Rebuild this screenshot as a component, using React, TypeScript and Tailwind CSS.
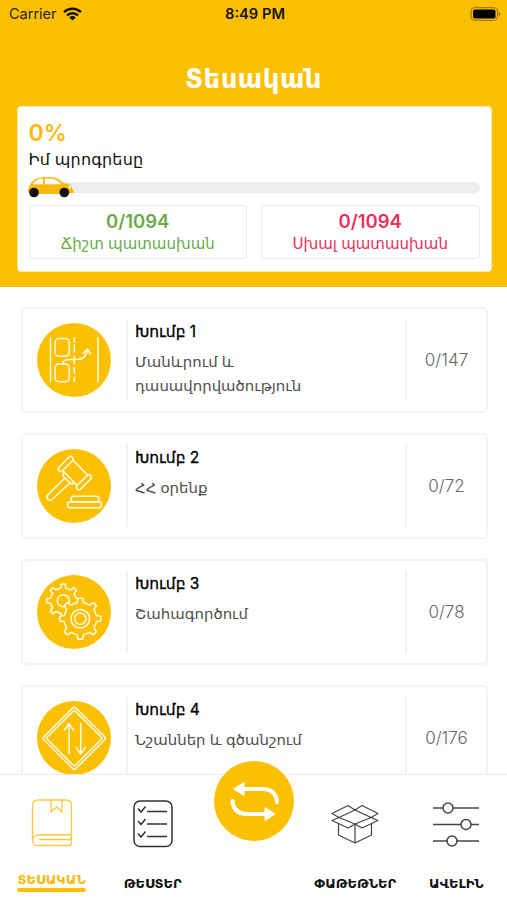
import React from 'react';

const CarIcon = () => (
  <svg width="47" height="22" viewBox="0 0 47 22" fill="none">
    <path
      d="M1 16.500V13l1.500-2.500c1-4 4.500-7.500 8.500-8.500 5-1.300 14-1.600 18 0 3 1.200 5.500 3.500 8 5.200 3 .2 6 .8 7.500 2.800l.7 2.500 1.300 1.500v3L37 18H8z"
      fill="#fbb90c"
    />
    <path d="M5.500 8.300c2-3 4.500-4.700 7-5.300l3.300-.5v5.800z" fill="#fff" />
    <path d="M17.800 2.500c4-.3 8 0 10.200 1 2 .9 4.500 2.800 6.500 4.800H17.800z" fill="#fff" />
    <circle cx="42.800" cy="11" r="1.300" fill="#fff" />
    <circle cx="7" cy="16.500" r="4.800" fill="#111" />
    <circle cx="37.300" cy="16.500" r="4.800" fill="#111" />
  </svg>
);

const LaneIcon = () => (
  <>
    <path d="M13.500 14.700v44M61 14.700v44" />
    <rect x="18" y="15.500" width="14.300" height="17.800" rx="4" />
    <rect x="18" y="41" width="14.300" height="17.800" rx="4" />
    <path d="M37.300 14.700v4M37.300 22v7M37.300 33v8M37.300 44.500v6M37.300 54.500v4" />
    <path d="M26 41c0-3 2.500-4.500 6-4.500h8c4 0 9-2 10.300-9.500M46 30.500l4.300-4.500 3.200 5" />
  </>
);

const GavelIcon = () => (
  <>
    <rect x="-9.500" y="-2.500" width="19" height="5" rx="2.500" transform="translate(28.700 15) rotate(-45)" />
    <rect x="-9.500" y="-2.500" width="19" height="5" rx="2.500" transform="translate(46.800 33.300) rotate(-45)" />
    <path d="M36.300 11.500L50 25.500M25.800 21.500L40 36.500" />
    <path d="M27 23l-1 4 8 8 4-1" />
    <path d="M28 29L11 45.500c-3 3.500 1 7.500 4.500 4.500L33 34" />
    <rect x="34.300" y="47.300" width="27.700" height="5.700" rx="2.500" />
    <rect x="30.500" y="53" width="34" height="5.700" rx="2.500" />
  </>
);

// outline of a cog with flat teeth around (cx, cy)
const cogPath = (cx: number, cy: number, root: number, tip: number, teeth: number) => {
  const points: string[] = [];
  const step = (Math.PI * 2) / teeth;
  for (let i = 0; i < teeth; i++) {
    const a = i * step - Math.PI / 2;
    [[-0.24, root], [-0.14, tip], [0.14, tip], [0.24, root]].forEach(([offset, r]) => {
      const t = a + offset * step;
      points.push(`${(cx + Math.cos(t) * r).toFixed(2)} ${(cy + Math.sin(t) * r).toFixed(2)}`);
    });
  }
  return `M${points.join('L')}Z`;
};

const CogsIcon = () => (
  <>
    <path d={cogPath(26.3, 25.7, 13, 16.8, 8)} />
    <circle cx="26.300" cy="25.700" r="6" />
    <path d={cogPath(43.3, 43.7, 16.5, 20.7, 8)} fill="#fbc002" />
    <circle cx="43.300" cy="43.700" r="9.300" />
    <circle cx="43.300" cy="43.700" r="5.700" />
  </>
);

const SignIcon = () => (
  <>
    <rect x="-22.500" y="-22.500" width="45" height="45" rx="2" transform="translate(37.300 37.300) rotate(45)" />
    <rect x="-19.800" y="-19.800" width="39.600" height="39.600" rx="1" transform="translate(37.300 37.300) rotate(45)" />
    <path d="M32 53V23M27.500 29l4.500-6.500 4.500 6.500M43.700 22.500v30M39.200 46.500l4.500 6.500 4.500-6.500" />
  </>
);

const groups = [
  { title: 'Խումբ 1', lines: ['Մանևրում և', 'դասավորվածություն'], score: '0/147', icon: <LaneIcon /> },
  { title: 'Խումբ 2', lines: ['ՀՀ օրենք'], score: '0/72', icon: <GavelIcon /> },
  { title: 'Խումբ 3', lines: ['Շահագործում'], score: '0/78', icon: <CogsIcon /> },
  { title: 'Խումբ 4', lines: ['Նշաններ և գծանշում'], score: '0/176', icon: <SignIcon /> },
];

const StatusBar = () => (
  <div className="grid h-7 grid-cols-3 items-center pl-[9px] pr-[6px] text-[14.500px] leading-none text-[#2b2205]">
    <div className="flex items-center gap-[6px]">
      <span>Carrier</span>
      <svg width="19" height="14" viewBox="0 0 19 14" fill="none" stroke="#111" strokeWidth="2.500">
        <path d="M1 5.200a12 12 0 0 1 17 0M4 8.400a7.800 7.800 0 0 1 11 0" />
        <path d="M9.500 13.500L6.300 10.400a4.500 4.500 0 0 1 6.400 0z" fill="#111" stroke="none" />
      </svg>
    </div>
    <span className="whitespace-nowrap text-center text-[14.700px] font-semibold text-[#171303]">8:49 PM</span>
    <svg className="justify-self-end" width="31" height="14" viewBox="0 0 31 14">
      <rect x="1" y=".7" width="26.500" height="12.600" rx="3.500" fill="none" stroke="#927006" />
      <rect x="3" y="2.500" width="22.500" height="9" rx="1.800" fill="#000" />
      <path d="M28.800 4.800c2 .8 2 3.600 0 4.400z" fill="#927006" />
    </svg>
  </div>
);

const Header = () => (
  <header className="h-[287px] bg-[#fbc002]">
    <StatusBar />
    <h1 className="flex h-[77px] items-center justify-center pt-[24px] text-[26px] font-bold leading-none tracking-[0.500px] text-white">
      Տեսական
    </h1>
    <section className="ml-[16.500px] mr-[15.500px] mt-px h-[166px] rounded-[4px] border border-[#fde9a8] bg-white px-[11px] pt-[13px]">
      <div className="h-[27px] text-[23px] font-semibold leading-[27px] text-[#fbb90c]">0%</div>
      <div className="h-[27px] whitespace-nowrap text-[16px] leading-[25px] tracking-[0.200px] text-[#111]">Իմ պրոգրեսը</div>
      <div className="relative mt-2 h-[11px] rounded-full bg-[#ededed]">
        <div className="absolute -left-[2px] -top-[6.500px]">
          <CarIcon />
        </div>
      </div>
      <div className="mt-3 grid grid-cols-2 gap-[14px] text-center">
        <div className="h-[54px] rounded-[4px] border border-[#ececec] pt-[4px] text-[#6aaa4a]">
          <div className="text-[18.500px] font-semibold leading-[22px]">0/1094</div>
          <div className="whitespace-nowrap text-[15px] leading-[23px]">Ճիշտ պատասխան</div>
        </div>
        <div className="h-[54px] rounded-[4px] border border-[#ececec] pt-[4px] text-[#e8315b]">
          <div className="text-[18.500px] font-semibold leading-[22px]">0/1094</div>
          <div className="whitespace-nowrap text-[15px] leading-[23px]">Սխալ պատասխան</div>
        </div>
      </div>
    </section>
  </header>
);

const GroupCard = ({ title, lines, score, icon }: (typeof groups)[number]) => (
  <div className="flex h-[106px] shrink-0 items-center rounded-[5px] border-2 border-[#f3f3f3] pl-[14px]">
    <svg
      className="shrink-0"
      width="74"
      height="74"
      viewBox="0 0 74 74"
      fill="none"
      stroke="#fffbea"
      strokeWidth="1.500"
      strokeLinecap="round"
      strokeLinejoin="round"
    >
      <circle cx="37" cy="37" r="37" fill="#fbc002" stroke="none" />
      {icon}
    </svg>
    <div className="ml-[15px] h-[82px] w-[281px] border-x-2 border-[#f3f3f3] pl-[7px] pt-px">
      <h2 className="whitespace-nowrap text-[15.500px] leading-6 text-black [-webkit-text-stroke:0.300px]">{title}</h2>
      <div className="mt-[6px] text-[14.900px] leading-6 text-[#4d4d4d]">
        {lines.map((line) => (
          <div key={line} className="whitespace-nowrap">{line}</div>
        ))}
      </div>
    </div>
    <div className="flex-1 pt-px text-center text-[17px] font-light text-[#666]">{score}</div>
  </div>
);

const BottomNav = () => (
  <nav className="absolute inset-x-0 bottom-0 grid h-[126px] grid-cols-5 border-t border-[#ebebeb] bg-white pl-px text-[13px] font-bold text-[#111]">
    <div className="flex flex-col items-center text-[#fbb90c]">
      <svg className="mt-[23px]" width="42" height="50" viewBox="0 0 42 50" fill="none" stroke="#fbc640" strokeWidth="1.300">
        <path d="M1.500 42V8q0-6 6-6h27q6 0 6 6v30q0 3.500-3 3.500" />
        <path d="M40.500 37H8q-6.500 0-6.500 5.500T8 47.500h30q2.500 0 2.500-3V36M39 41.500H8" />
        <path d="M20 2v12l5.500-5 5.500 5V2" />
      </svg>
      <span className="mt-[22px] leading-[18px] tracking-[0.100px]">ՏԵՍԱԿԱՆ</span>
      <span className="h-[4px] w-[69px] rounded-sm bg-[#fbc002]" />
    </div>
    <div className="flex flex-col items-center">
      <svg className="mt-[24px]" width="42" height="50" viewBox="0 0 42 50" fill="none" stroke="#333" strokeWidth="1.500">
        <rect x="2" y="2" width="38" height="45.500" rx="6" />
        <path d="M15 12.500h20M15 25h20M15 37.500h20" />
        <path d="M6 9.500l3 3.500 4.500-5.500M6 22l3 3.500 4.500-5.500M6 34.500l3 3.500 4.500-5.500" />
      </svg>
      <span className="mt-[25px] leading-[18px]">ԹԵՍՏԵՐ</span>
    </div>
    <div className="flex justify-center">
      <div className="-mt-[14px] h-[80px] w-[80px] rounded-full bg-[#fbc002]">
        <svg width="80" height="80" viewBox="0 0 80 80" fill="none" stroke="#fff" strokeWidth="4">
          <path d="M26 28h22q14 0 15 13M18.500 40q1 13 15 13H54" strokeLinecap="round" />
          <path d="M30 21.500v13L19.500 28zM51 46.500v13L61 53z" fill="#fff" strokeWidth="1" strokeLinejoin="round" />
        </svg>
      </div>
    </div>
    <div className="flex flex-col items-center">
      <svg className="mt-[25px]" width="48" height="50" viewBox="0 0 48 50" fill="none" stroke="#444" strokeWidth="1.200" strokeLinejoin="round">
        <path d="M1 13.500l16-8 7 4.500 7-4.500 16 8-7 4 7 3-16 7.500-7-4-7 4-16-7.500 7-3z" />
        <path d="M8 17.500L24 10l16 7.500L24 24z" />
        <path d="M7.500 23.500V35L24 43l16.500-8V23.500M24 24v19" />
      </svg>
      <span className="mt-[24px] whitespace-nowrap leading-[18px]">ՓԱԹԵԹՆԵՐ</span>
    </div>
    <div className="flex flex-col items-center">
      <svg className="mt-[25px]" width="48" height="50" viewBox="0 0 48 50" fill="#fff" stroke="#444" strokeWidth="1.500">
        <path d="M1 8h46M1 24.500h46M1 41h46" />
        <circle cx="16" cy="8" r="5" />
        <circle cx="34" cy="24.500" r="5" />
        <circle cx="20" cy="41" r="5" />
      </svg>
      <span className="mt-[24px] leading-[18px]">ԱՎԵԼԻՆ</span>
    </div>
  </nav>
);

const App = () => {
  return (
    <div className="relative h-[900px] w-[507px] overflow-hidden bg-white font-['Inter','DejaVu_Sans',sans-serif]">
      <Header />
      <main className="flex flex-col gap-5 pl-[21px] pr-[19px] pt-5">
        {groups.map((group) => (
          <GroupCard key={group.title} {...group} />
        ))}
      </main>
      <BottomNav />
    </div>
  );
};

export default App;
